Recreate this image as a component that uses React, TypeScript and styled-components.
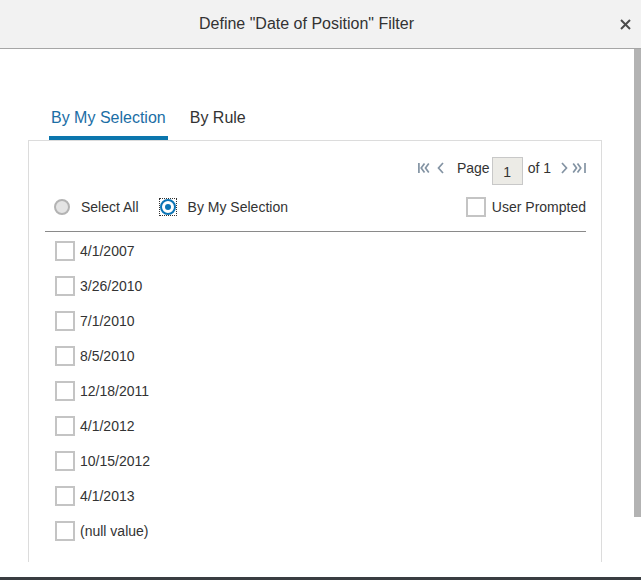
import React from "react";
import styled, { createGlobalStyle } from "styled-components";

const GlobalStyle = createGlobalStyle`
  html, body { margin: 0; padding: 0; background: #fff; }
  body { font-family: "Liberation Sans", Arial, sans-serif; color: #333; }
  * { box-sizing: border-box; }
`;

const Dialog = styled.div`
  width: 641px;
  height: 580px;
  display: flex;
  flex-direction: column;
  background: #fff;
  overflow: hidden;
`;

const Header = styled.header`
  height: 49px;
  flex: none;
  display: flex;
  align-items: center;
  background: #f2f2f2;
  border-bottom: 1px solid #a6a6a6;
`;

const Title = styled.h1`
  flex: 1;
  margin: 0;
  text-align: center;
  font-size: 16px;
  line-height: 20px;
  font-weight: normal;
  color: #333;
`;

const CloseButton = styled.button`
  width: 28px;
  height: 28px;
  padding: 0 3px 0 0;
  border: 0;
  background: transparent;
  display: flex;
  align-items: center;
  justify-content: center;
  color: #4a4a4a;
`;

const Body = styled.div`
  flex: 1;
  min-height: 0;
  display: flex;
`;

const ScrollArea = styled.div`
  flex: 1;
  overflow: hidden;
`;

const ScrollTrack = styled.div`
  width: 7px;
  flex: none;
  background: #fff;
`;

const ScrollThumb = styled.div`
  width: 7px;
  background: #b3b3b3;
`;

const Content = styled.div`
  padding: 59px 32px 83px 28px;
`;

const TabList = styled.div`
  display: flex;
  gap: 20px;
  margin-left: 21px;
`;

const Tab = styled.div<{ $active?: boolean }>`
  padding: 0 2px 8px;
  font-size: 16px;
  line-height: 20px;
  border-bottom: 4px solid ${(p) => (p.$active ? "#0b76ad" : "transparent")};
  color: ${(p) => (p.$active ? "#1b6ea5" : "#333")};
`;

const Panel = styled.div`
  border: 1px solid #dcdcdc;
  border-bottom: none;
  padding: 16px 15px 21px 16px;
`;

const PagerRow = styled.div`
  display: flex;
  justify-content: flex-end;
  align-items: center;
  height: 28px;
  font-size: 14px;
  color: #333;
`;

const PagerIcon = styled.svg<{ $gap?: number }>`
  display: block;
  margin-left: ${(p) => p.$gap ?? 0}px;
  margin-bottom: 6px;
  color: #8393a3;
`;

const PagerText = styled.span<{ $gap?: number }>`
  margin-left: ${(p) => p.$gap ?? 0}px;
  margin-bottom: 6px;
  line-height: 16px;
`;

const PageInput = styled.div`
  width: 31px;
  height: 28px;
  margin-left: 2px;
  background: #ecebe6;
  border: 1px solid #c8c8c8;
  display: flex;
  align-items: center;
  justify-content: center;
  padding-top: 2px;
  font-size: 14px;
`;

const ControlsRow = styled.div`
  margin-top: 12px;
  display: flex;
  align-items: center;
  justify-content: space-between;
  padding-bottom: 14px;
  border-bottom: 1px solid #8a8a8a;
  font-size: 14px;
`;

const RadioGroup = styled.div`
  display: flex;
  align-items: center;
  gap: 20px;
  margin-left: 9px;
`;

const RadioOption = styled.label`
  display: flex;
  align-items: center;
  gap: 11px;
  height: 20px;
`;

const FocusRing = styled.span`
  display: flex;
  padding: 0;
  border: 1px dotted #333;
`;

const Radio = styled.span<{ $checked?: boolean }>`
  position: relative;
  width: 16px;
  height: 16px;
  border-radius: 50%;
  border: 2px solid ${(p) => (p.$checked ? "#0b74b5" : "#b3b3b3")};
  background: ${(p) => (p.$checked ? "#fff" : "#e4e4e4")};
  &::after {
    content: "";
    display: ${(p) => (p.$checked ? "block" : "none")};
    position: absolute;
    left: 3px;
    top: 3px;
    width: 6px;
    height: 6px;
    border-radius: 50%;
    background: #0b74b5;
  }
`;

const CheckOption = styled.label<{ $gap: number }>`
  display: flex;
  align-items: center;
  gap: ${(p) => p.$gap}px;
  height: 20px;
  font-size: 14px;
  color: #333;
`;

const Checkbox = styled.span`
  width: 20px;
  height: 20px;
  border: 2px solid #c4c4c4;
  background: #fff;
  flex: none;
`;

const ValueList = styled.div`
  padding-top: 9px;
  display: flex;
  flex-direction: column;
  gap: 15px;
  margin-left: 10px;
`;

const FooterBar = styled.div`
  height: 3px;
  flex: none;
  background: #3a3d41;
`;

const FirstIcon = ({ gap }: { gap?: number }) => (
  <PagerIcon $gap={gap} width="12" height="12" viewBox="0 0 12 12" fill="none" stroke="currentColor" strokeWidth="1.7">
    <line x1="0.9" y1="1" x2="0.9" y2="11" />
    <polyline points="6.5,1.5 3.2,6 6.5,10.5" />
    <polyline points="10.8,1.5 7.5,6 10.8,10.5" />
  </PagerIcon>
);

const LastIcon = ({ gap }: { gap?: number }) => (
  <PagerIcon $gap={gap} width="14" height="12" viewBox="0 0 14 12" fill="none" stroke="currentColor" strokeWidth="1.7">
    <polyline points="1.2,1.5 4.5,6 1.2,10.5" />
    <polyline points="5.5,1.5 8.8,6 5.5,10.5" />
    <line x1="13" y1="1" x2="13" y2="11" />
  </PagerIcon>
);

const PrevIcon = ({ gap }: { gap?: number }) => (
  <PagerIcon $gap={gap} width="7" height="12" viewBox="0 0 7 12" fill="none" stroke="currentColor" strokeWidth="1.7">
    <polyline points="6,1 1.5,6 6,11" />
  </PagerIcon>
);

const NextIcon = ({ gap }: { gap?: number }) => (
  <PagerIcon $gap={gap} width="7" height="12" viewBox="0 0 7 12" fill="none" stroke="currentColor" strokeWidth="1.7">
    <polyline points="1,1 5.5,6 1,11" />
  </PagerIcon>
);

const values = [
  "4/1/2007",
  "3/26/2010",
  "7/1/2010",
  "8/5/2010",
  "12/18/2011",
  "4/1/2012",
  "10/15/2012",
  "4/1/2013",
  "(null value)",
];

const VIEW_HEIGHT = 528;
const CONTENT_HEIGHT = 596;

export default function App() {
  const thumbHeight = Math.round((VIEW_HEIGHT * VIEW_HEIGHT) / CONTENT_HEIGHT);
  return (
    <>
      <GlobalStyle />
      <Dialog>
        <Header>
          <Title>Define "Date of Position" Filter</Title>
          <CloseButton aria-label="Close">
            <svg width="11" height="11" viewBox="0 0 11 11" stroke="currentColor" strokeWidth="2">
              <line x1="1" y1="1" x2="10" y2="10" />
              <line x1="10" y1="1" x2="1" y2="10" />
            </svg>
          </CloseButton>
        </Header>
        <Body>
          <ScrollArea>
            <Content>
              <TabList>
                <Tab $active>By My Selection</Tab>
                <Tab>By Rule</Tab>
              </TabList>
              <Panel>
                <PagerRow>
                  <FirstIcon />
                  <PrevIcon gap={7} />
                  <PagerText $gap={13}>Page</PagerText>
                  <PageInput>1</PageInput>
                  <PagerText $gap={5}>of 1</PagerText>
                  <NextIcon gap={10} />
                  <LastIcon gap={4} />
                </PagerRow>
                <ControlsRow>
                  <RadioGroup>
                    <RadioOption>
                      <Radio />
                      Select All
                    </RadioOption>
                    <RadioOption>
                      <FocusRing>
                        <Radio $checked />
                      </FocusRing>
                      By My Selection
                    </RadioOption>
                  </RadioGroup>
                  <CheckOption $gap={6}>
                    <Checkbox />
                    User Prompted
                  </CheckOption>
                </ControlsRow>
                <ValueList>
                  {values.map((v) => (
                    <CheckOption key={v} $gap={5}>
                      <Checkbox />
                      {v}
                    </CheckOption>
                  ))}
                </ValueList>
              </Panel>
            </Content>
          </ScrollArea>
          <ScrollTrack>
            <ScrollThumb style={{ height: thumbHeight }} />
          </ScrollTrack>
        </Body>
        <FooterBar />
      </Dialog>
    </>
  );
}
